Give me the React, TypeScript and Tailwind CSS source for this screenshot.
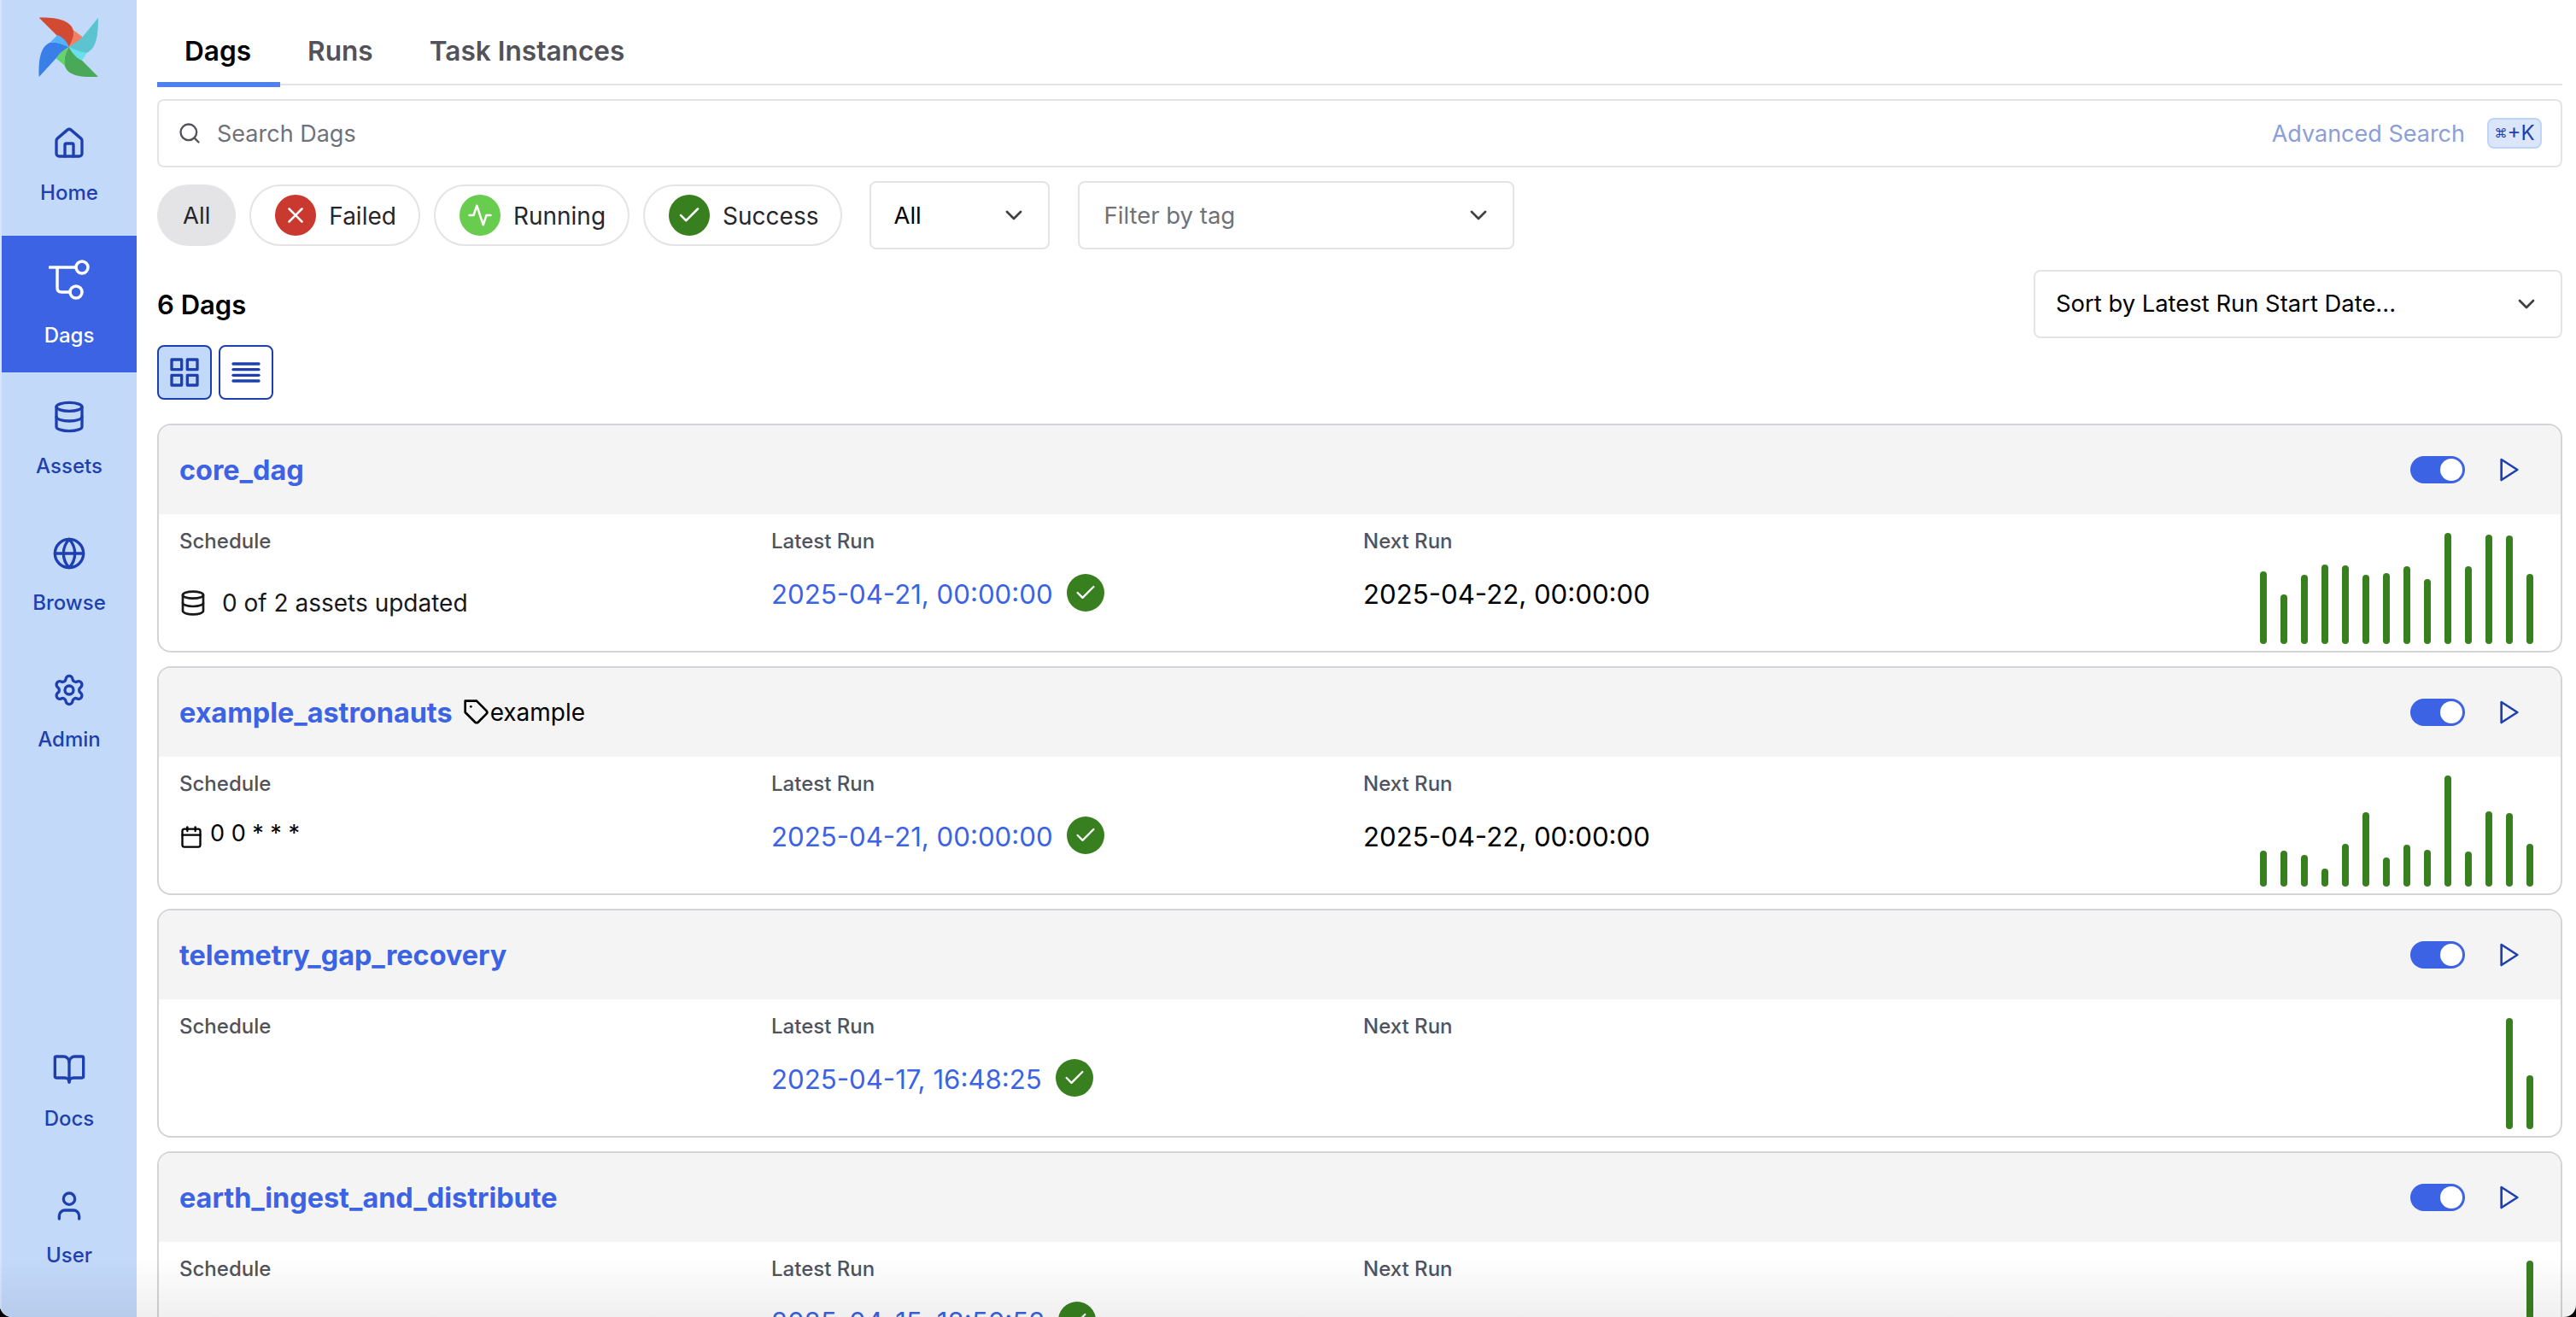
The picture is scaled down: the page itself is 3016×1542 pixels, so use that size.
import { BookOpen, Database, Globe, House, Settings, User } from "lucide-react";
import {
  FiActivity,
  FiAlignJustify,
  FiCalendar,
  FiCheck,
  FiChevronDown,
  FiGrid,
  FiPlay,
  FiSearch,
  FiTag,
  FiX,
} from "react-icons/fi";

const topNav = [
  { label: "Assets", icon: Database },
  { label: "Browse", icon: Globe },
  { label: "Admin", icon: Settings },
];

const dags = [
  {
    id: "core_dag",
    schedule: "assets",
    latest: "2025-04-21, 00:00:00",
    next: "2025-04-22, 00:00:00",
    bars: [85, 58, 81, 93, 92, 81, 83, 91, 76, 130, 91, 128, 127, 82],
  },
  {
    id: "example_astronauts",
    tag: "example",
    schedule: "cron",
    latest: "2025-04-21, 00:00:00",
    next: "2025-04-22, 00:00:00",
    bars: [42, 42, 37, 21, 50, 87, 34, 49, 43, 130, 41, 88, 86, 50],
  },
  {
    id: "telemetry_gap_recovery",
    latest: "2025-04-17, 16:48:25",
    bars: [130, 63],
  },
  {
    id: "earth_ingest_and_distribute",
    latest: "2025-04-15, 18:50:52",
    bars: [130],
  },
];

function Logo() {
  return (
    <svg viewBox="0 0 270 270" className="h-[90px] w-[90px]">
      <path fill="#d24a32" d="M32 32C90 30 140 40 152 75C158 95 148 115 137 135C120 120 100 100 85 85Z" />
      <path fill="#f37f60" d="M152 75L185 100C170 120 155 130 137 135C148 115 158 95 152 75Z" />
      <path fill="#5bc4d0" d="M240 32C240 90 235 140 200 155C185 160 160 150 137 135C150 125 170 115 185 100Z" />
      <path fill="#68dfea" d="M137 135C160 145 185 155 200 155L183 182C165 175 148 160 137 135Z" />
      <path fill="#4aa958" d="M240 240C185 240 135 240 122 200C118 180 125 155 137 135C150 160 165 175 183 182Z" />
      <path fill="#64d36b" d="M137 135C125 155 118 180 122 200L92 175C105 155 120 145 137 135Z" />
      <path fill="#3a7fe8" d="M32 240C30 185 35 135 70 120C90 115 115 125 137 135C120 145 105 155 92 175Z" />
      <path fill="#52b2fb" d="M137 135C115 125 90 115 70 120L97 93C115 100 130 115 137 135Z" />
    </svg>
  );
}

function DagIcon() {
  return (
    <svg viewBox="0 0 48 48" className="h-[48px] w-[48px]" fill="none" stroke="currentColor" strokeWidth="3.5" strokeLinecap="round">
      <circle cx="39" cy="9" r="7" />
      <circle cx="32" cy="38" r="7" />
      <path d="M1 9H32M10 9V33Q10 38 15 38H25" />
    </svg>
  );
}

function NavItem({ label, icon: Icon }: { label: string; icon: typeof House }) {
  return (
    <div className="flex h-[160px] flex-col items-center justify-center gap-[27px] pb-[7px] text-[#1e40af]">
      <Icon size={40} strokeWidth={2} />
      <span className="text-[24px] leading-[22px] font-medium">{label}</span>
    </div>
  );
}

function StatusPill({ label, color, icon }: { label: string; color: string; icon: React.ReactNode }) {
  return (
    <div className="flex h-[72px] items-center gap-[15px] rounded-full border-2 border-[#e4e4e7] pr-[26px] pl-[28px] text-[28px] text-[#27272a]">
      <span className={`flex h-[48px] w-[48px] items-center justify-center rounded-full text-white ${color}`}>{icon}</span>
      <span className="pt-[2px]">{label}</span>
    </div>
  );
}

function DagCard({ dag }: { dag: (typeof dags)[number] }) {
  return (
    <div className="h-[268px] shrink-0 overflow-hidden rounded-[16px] border-2 border-[#d4d4d8] bg-white">
      <div className="flex h-[104px] items-center bg-[#f4f4f5] pr-[44px] pl-[24px]">
        <span className="pt-[2px] text-[32.4px] font-bold text-[#3b63e3]">{dag.id}</span>
        {dag.tag && (
          <span className="ml-[12px] flex items-center text-[28px] text-black">
            <FiTag size={32} />
            {dag.tag}
          </span>
        )}
        <div className="ml-auto flex items-center gap-[36px]">
          <div className="flex h-[32px] w-[64px] items-center justify-end rounded-full bg-[#3b63e3] pr-[3px]">
            <div className="h-[26px] w-[26px] rounded-full bg-white" />
          </div>
          <FiPlay size={32} className="text-[#1e40af]" />
        </div>
      </div>
      <div className="flex h-[160px] pl-[24px]">
        <div className="w-[693px] pt-[16px]">
          <div className="text-[24px] leading-[32px] font-medium text-[#52525b]">Schedule</div>
          {dag.schedule === "assets" && (
            <div className="mt-[36px] flex items-center gap-[18px] text-[28px] leading-[40px] text-[#18181b]">
              <Database size={32} strokeWidth={2} />
              0 of 2 assets updated
            </div>
          )}
          {dag.schedule === "cron" && (
            <div className="mt-[22px] flex items-start gap-[8px] text-[27px] leading-[40px] text-black">
              <FiCalendar size={28} className="mt-[10px]" />
              0 0 * * *
            </div>
          )}
        </div>
        <div className="w-[693px] pt-[16px]">
          <div className="text-[24px] leading-[32px] font-medium text-[#52525b]">Latest Run</div>
          <div className="mt-[22px] flex items-center gap-[16px]">
            <span className="text-[31.2px] leading-[48px] text-[#3b63e3]">{dag.latest}</span>
            <span className="mb-[4px] flex h-[44px] w-[44px] items-center justify-center rounded-full bg-[#38801f] text-white">
              <FiCheck size={28} />
            </span>
          </div>
        </div>
        <div className="pt-[16px]">
          <div className="text-[24px] leading-[32px] font-medium text-[#52525b]">Next Run</div>
          {dag.next && <div className="mt-[22px] text-[31.2px] leading-[48px] text-black">{dag.next}</div>}
        </div>
        <div className="ml-auto flex items-end gap-[16px] pr-[32px] pb-[8px]">
          {dag.bars.map((h, i) => (
            <div key={i} className="w-[8px] rounded-[4px] bg-[#38801f]" style={{ height: h }} />
          ))}
        </div>
      </div>
    </div>
  );
}

export default function App() {
  return (
    <div className="h-[1542px] w-[3016px] overflow-hidden bg-black [font-family:Inter,'DejaVu_Sans',sans-serif]">
      <div className="relative flex h-full overflow-hidden rounded-b-[14px] bg-white">
        {/* sidebar */}
        <div className="flex h-full w-[160px] shrink-0 flex-col justify-between border-l-2 border-[#d6e4fb] bg-[#c3d9fa] pb-[22px]">
          <div>
            <div className="flex h-[116px] items-start justify-center pt-[10px] pr-[2px]">
              <Logo />
            </div>
            <NavItem label="Home" icon={House} />
            <div className="flex h-[160px] flex-col items-center justify-center gap-[30px] bg-[#3b63e3] pb-[4px] text-white">
              <DagIcon />
              <span className="text-[24px] leading-[22px] font-medium">Dags</span>
            </div>
            {topNav.map((item) => (
              <NavItem key={item.label} label={item.label} icon={item.icon} />
            ))}
          </div>
          <div>
            <NavItem label="Docs" icon={BookOpen} />
            <NavItem label="User" icon={User} />
          </div>
        </div>

        {/* main */}
        <div className="flex min-w-0 flex-1 flex-col pr-[16px] pl-[24px]">
          <div className="flex h-[100px] shrink-0 border-b-2 border-[#e4e4e7] text-[31.6px] font-semibold text-[#52525b]">
            <div className="flex h-[102px] items-center border-b-[6px] border-[#4f80ed] pt-[24px] pr-[34px] pl-[32px] text-black">Dags</div>
            <div className="flex h-[98px] items-center pt-[22px] pr-[34px] pl-[32px]">Runs</div>
            <div className="flex h-[98px] items-center px-[32px] pt-[22px]">Task Instances</div>
          </div>

          <div className="mt-[16px] flex h-[80px] shrink-0 items-center rounded-[8px] border-2 border-[#e4e4e7] pr-[22px] pl-[22px]">
            <FiSearch size={28} className="text-[#52525b]" />
            <span className="ml-[18px] pt-[2px] text-[27px] text-[#71717a]">Search Dags</span>
            <span className="ml-auto pt-[2px] text-[27px] text-[#8b9ed8]">Advanced Search</span>
            <span className="ml-[26px] flex h-[36px] w-[64px] items-center justify-center rounded-[8px] border-2 border-[#bfd5f8] bg-[#dbe6fb] text-[24px] text-[#1e40af]">
              <span className="text-[15px]">⌘</span>+K
            </span>
          </div>

          <div className="mt-[16px] flex h-[80px] shrink-0 items-center gap-[16px]">
            <div className="flex h-[72px] items-center rounded-full bg-[#e4e4e7] px-[30px] pt-[2px] text-[27.5px] text-[#27272a]">All</div>
            <StatusPill label="Failed" color="bg-[#c9392f]" icon={<FiX size={30} />} />
            <StatusPill label="Running" color="bg-[#68cc4e]" icon={<FiActivity size={30} />} />
            <StatusPill label="Success" color="bg-[#38801f]" icon={<FiCheck size={30} />} />
            <div className="ml-[16px] flex h-[80px] w-[211px] items-center justify-between rounded-[8px] border-2 border-[#e4e4e7] pr-[24px] pl-[26px] text-[27.5px] text-black">
              <span className="pt-[2px]">All</span>
              <FiChevronDown size={32} className="text-[#3f3f46]" />
            </div>
            <div className="ml-[17px] flex h-[80px] w-[511px] items-center justify-between rounded-[8px] border-2 border-[#e4e4e7] pr-[24px] pl-[28px] text-[27.5px] text-[#71717a]">
              <span className="pt-[2px]">Filter by tag</span>
              <FiChevronDown size={32} className="text-[#3f3f46]" />
            </div>
          </div>

          <div className="mt-[24px] flex h-[80px] shrink-0 items-center justify-between">
            <span className="pt-[2px] text-[31px] font-semibold text-black">6 Dags</span>
            <div className="flex h-[80px] w-[619px] items-center justify-between rounded-[8px] border-2 border-[#e4e4e7] pr-[24px] pl-[24px] text-[27.4px] text-black">
              Sort by Latest Run Start Date...
              <FiChevronDown size={32} className="text-[#3f3f46]" />
            </div>
          </div>

          <div className="mt-[8px] flex shrink-0 gap-[8px]">
            <div className="flex h-[64px] w-[64px] items-center justify-center rounded-[8px] border-2 border-[#1e40af] bg-[#c3d9fa] text-[#1e40af]">
              <FiGrid size={40} />
            </div>
            <div className="flex h-[64px] w-[64px] items-center justify-center rounded-[8px] border-2 border-[#1e40af] text-[#1e40af]">
              <FiAlignJustify size={40} />
            </div>
          </div>

          <div className="mt-[28px] flex flex-col gap-[16px]">
            {dags.map((dag) => (
              <DagCard key={dag.id} dag={dag} />
            ))}
          </div>
        </div>

        {/* fade at the bottom edge of the window */}
        <div className="absolute right-0 bottom-0 left-0 h-[70px] bg-gradient-to-b from-transparent to-black/[0.06]" />
      </div>
    </div>
  );
}
